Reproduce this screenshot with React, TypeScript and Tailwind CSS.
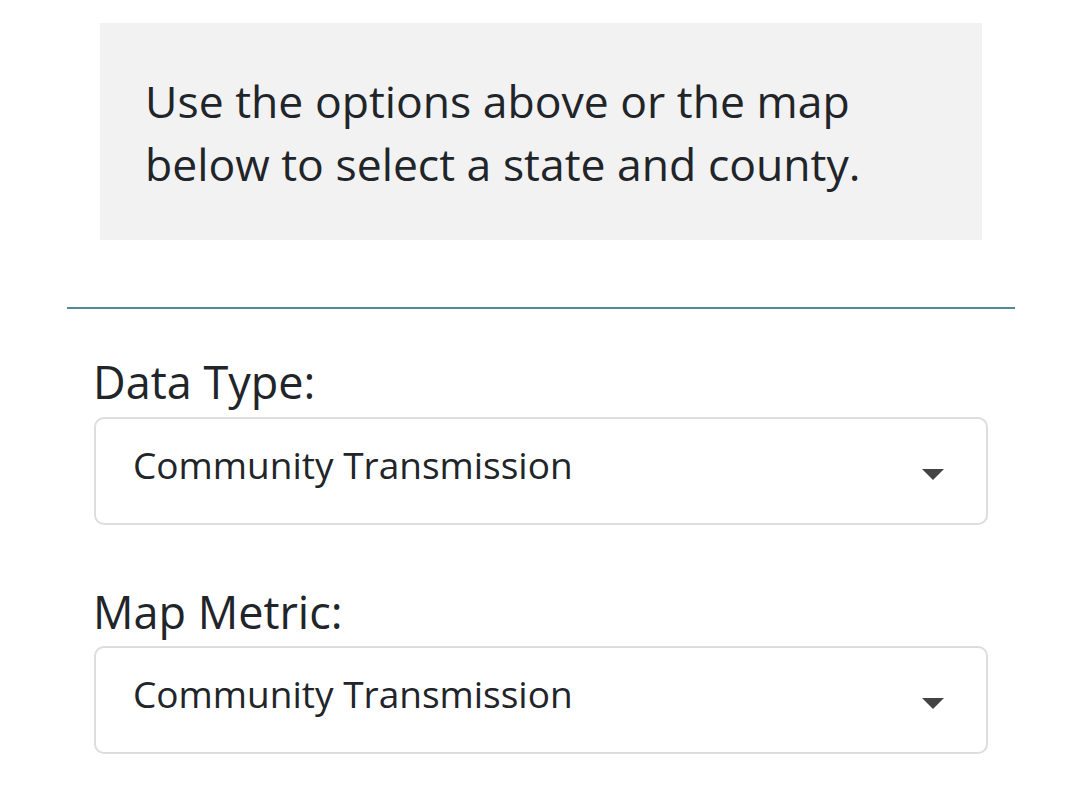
import React from 'react'

const Caret = () => (
  <svg width="22" height="11" viewBox="0 0 22 11" className="shrink-0 mt-[7px]">
    <path d="M0 0 H22 L11 11 Z" fill="#444" />
  </svg>
)

const SelectBox = ({ value }: { value: string }) => (
  <div className="flex items-center justify-between w-[894px] h-[108px] border-2 border-[#dddddd] rounded-[10px] bg-white pl-[37px] pr-[42px]">
    <span className="text-[37px] text-[#212529] pb-[12px]">{value}</span>
    <Caret />
  </div>
)

const App = () => {
  return (
    <div className="w-[1080px] min-h-[798px] bg-white pt-[23px]" style={{ fontFamily: '"Open Sans", sans-serif' }}>
      <div className="ml-[100px] w-[882px] h-[217px] bg-[#f2f2f2] px-[45px] pt-[46px]">
        <p className="text-[44.5px] leading-[63px] text-[#212529]">
          Use the options above or the map
          <br />
          below to select a state and county.
        </p>
      </div>
      <div className="ml-[67px] w-[948px] h-[2px] bg-[#4f8a9b] mt-[67px]" />
      <div className="ml-[94px] mt-[41px]">
        <label className="block text-[45px] leading-[63px] text-[#212529] -ml-[1px] mb-[4px]">Data Type:</label>
        <SelectBox value="Community Transmission" />
        <label className="block text-[45px] leading-[63px] text-[#212529] -ml-[1px] mt-[55px] mb-[3px]">Map Metric:</label>
        <SelectBox value="Community Transmission" />
      </div>
    </div>
  )
}

export default App
